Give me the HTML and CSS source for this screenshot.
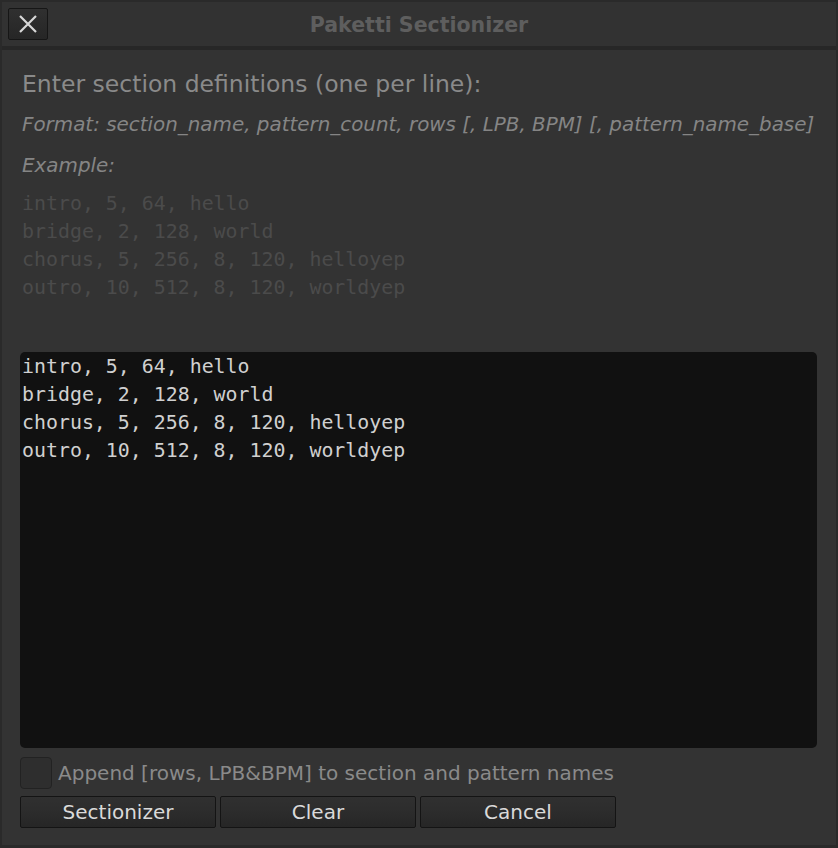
FILE: index.html
```html
<!DOCTYPE html>
<html>
<head>
<meta charset="utf-8">
<link rel="stylesheet" href="styles.css">
</head>
<body>
<div class="window">
  <div class="titlebar">
    <button class="close" aria-label="Close">
      <svg width="20" height="20" viewBox="0 0 20 20"><path d="M2 2 L18 18 M18 2 L2 18" stroke="#d8d8d8" stroke-width="2.2" fill="none"/></svg>
    </button>
    <div class="title">Paketti Sectionizer</div>
  </div>
  <div class="content">
    <div class="heading">Enter section definitions (one per line):</div>
    <div class="hint fmt">Format: section_name, pattern_count, rows [, LPB, BPM] [, pattern_name_base]</div>
    <div class="hint ex">Example:</div>
    <div class="example">
      <div>intro, 5, 64, hello</div>
      <div>bridge, 2, 128, world</div>
      <div>chorus, 5, 256, 8, 120, helloyep</div>
      <div>outro, 10, 512, 8, 120, worldyep</div>
    </div>
    <div class="editor">
      <div>intro, 5, 64, hello</div>
      <div>bridge, 2, 128, world</div>
      <div>chorus, 5, 256, 8, 120, helloyep</div>
      <div>outro, 10, 512, 8, 120, worldyep</div>
    </div>
    <div class="check-row">
      <span class="checkbox"></span>
      <span class="check-label">Append [rows, LPB&amp;BPM] to section and pattern names</span>
    </div>
    <div class="buttons">
      <button class="btn">Sectionizer</button>
      <button class="btn">Clear</button>
      <button class="btn">Cancel</button>
    </div>
  </div>
</div>
</body>
</html>
```
FILE: styles.css
```css
html, body {
  margin: 0;
  padding: 0;
  background: #2a2a2a;
}
body {
  width: 838px;
  height: 848px;
  overflow: hidden;
  font-family: "DejaVu Sans", sans-serif;
}
.window {
  width: 838px;
  height: 848px;
  box-sizing: border-box;
  display: flex;
  flex-direction: column;
  background: #2a2a2a;
  padding-top: 2px;
}
.titlebar {
  height: 44px;
  margin: 0 2px 0 2px;
  background: #323232;
  position: relative;
  display: flex;
  align-items: center;
  justify-content: center;
  border-bottom: 4px solid #272727;
}
.close {
  position: absolute;
  left: 6px;
  top: 6px;
  width: 40px;
  height: 32px;
  box-sizing: border-box;
  border: 1px solid #161616;
  border-radius: 2px;
  background: linear-gradient(#303030, #262626);
  display: flex;
  align-items: center;
  justify-content: center;
  padding: 0;
}
.title {
  font-weight: bold;
  font-size: 20.5px;
  color: #5e5e5e;
  margin-top: 1px;
}
.content {
  flex: 1;
  margin: 0 2px 3px 2px;
  background: #333333;
  padding: 0 19px 0 18px;
  display: flex;
  flex-direction: column;
}
.heading {
  margin-top: 19px;
  font-size: 23.5px;
  line-height: 30px;
  color: #8a8a8a;
  padding-left: 2px;
}
.hint {
  font-style: italic;
  font-size: 19.9px;
  color: #858585;
  line-height: 24px;
  padding-left: 2px;
  white-space: nowrap;
}
.fmt { margin-top: 14px; }
.ex { margin-top: 17px; }
.example {
  margin-top: 12px;
  font-family: "DejaVu Sans Mono", monospace;
  font-size: 19.9px;
  line-height: 28px;
  color: #4b4b4b;
  padding-left: 2px;
}
.editor {
  margin-top: 50px;
  height: 396px;
  box-sizing: border-box;
  background: #111111;
  border-radius: 5px;
  padding: 1px 2px;
  font-family: "DejaVu Sans Mono", monospace;
  font-size: 19.9px;
  line-height: 28px;
  color: #d0d0d0;
}
.check-row {
  margin-top: 9px;
  display: flex;
  align-items: center;
  gap: 6px;
}
.checkbox {
  width: 32px;
  height: 32px;
  box-sizing: border-box;
  border: 1px solid #222222;
  border-radius: 4px;
  background: #2e2e2e;
}
.check-label {
  font-size: 20px;
  color: #8a8a8a;
}
.buttons {
  margin-top: 7px;
  display: flex;
  gap: 4px;
}
.btn {
  width: 196px;
  height: 32px;
  box-sizing: border-box;
  border: 1px solid #141414;
  border-radius: 2px;
  background: linear-gradient(#303030 0%, #2c2c2c 50%, #262626 100%);
  color: #dadada;
  font-family: "DejaVu Sans", sans-serif;
  font-size: 20px;
  padding: 0;
}
```
